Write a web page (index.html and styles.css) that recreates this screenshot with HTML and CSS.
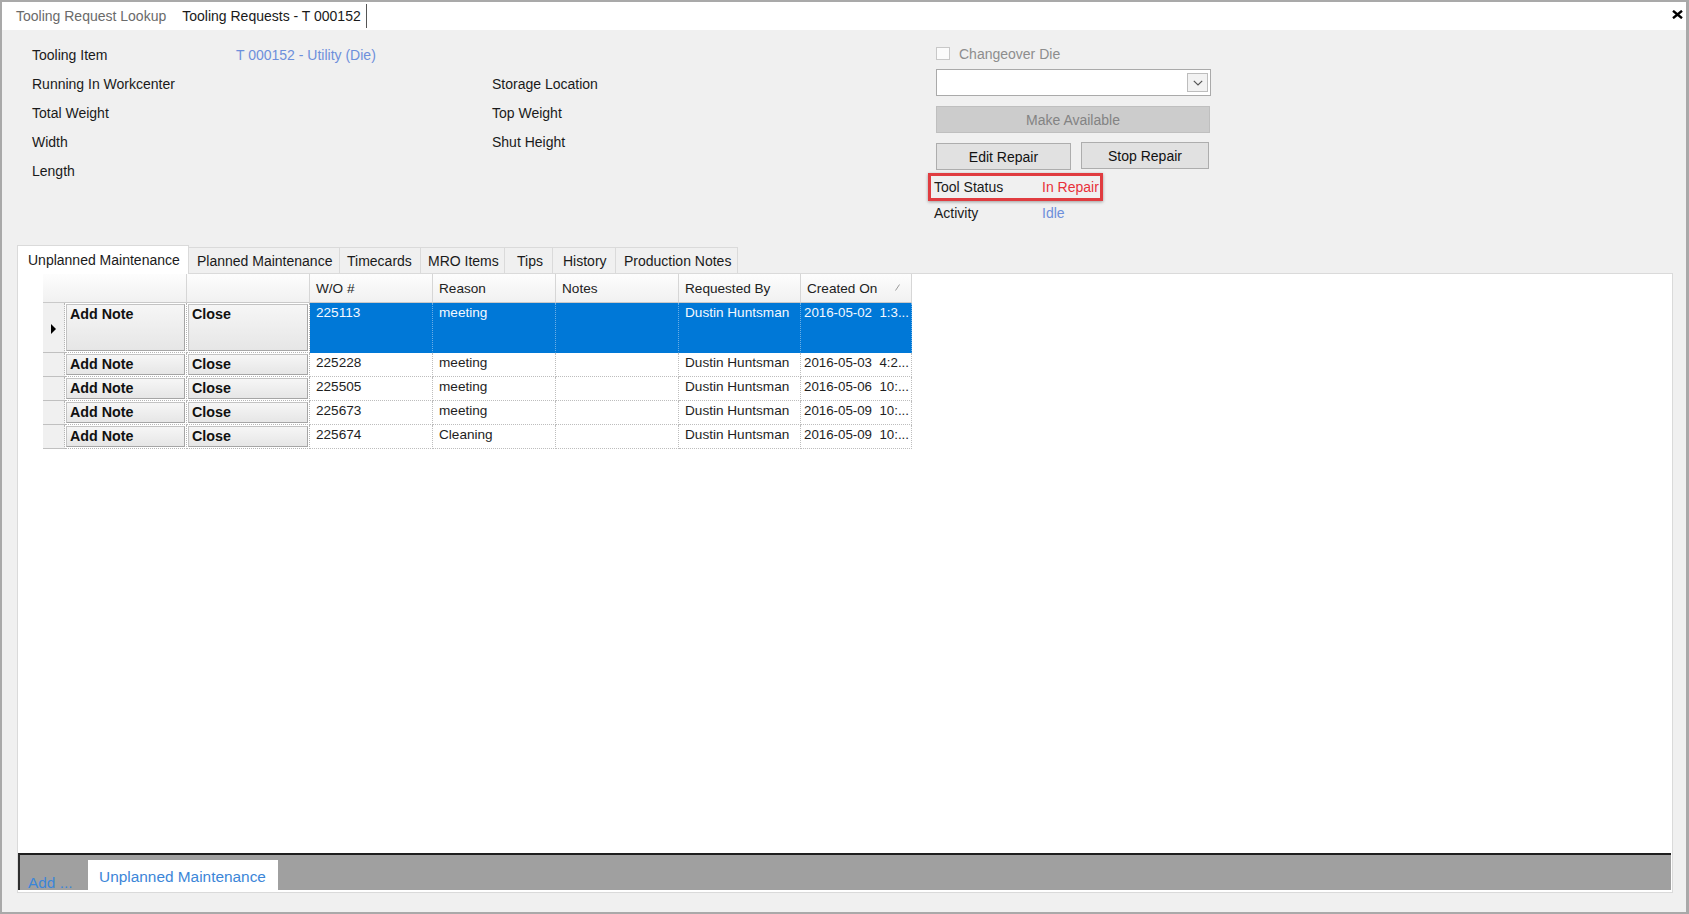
FILE: index.html
```html
<!DOCTYPE html>
<html>
<head>
<meta charset="utf-8">
<link rel="stylesheet" href="styles.css">
</head>
<body>
<div class="window">
  <div class="doctabs">
    <div class="doctab doctab-inactive">Tooling Request Lookup</div>
    <div class="doctab doctab-active">Tooling Requests - T 000152</div>
    <div class="doctab-sep"></div>
    <div class="doctab-close">
      <svg width="11" height="9" viewBox="0 0 11 9"><path d="M1 0.8 L10 8.2 M10 0.8 L1 8.2" stroke="#000" stroke-width="2.4" fill="none"/></svg>
    </div>
  </div>

  <div class="top">
    <div class="fields">
      <div class="lbl">Tooling Item</div><div class="val link">T 000152 - Utility (Die)</div><div></div>
      <div class="lbl">Running In Workcenter</div><div></div><div class="lbl">Storage Location</div>
      <div class="lbl">Total Weight</div><div></div><div class="lbl">Top Weight</div>
      <div class="lbl">Width</div><div></div><div class="lbl">Shut Height</div>
      <div class="lbl">Length</div><div></div><div></div>
    </div>
    <div class="controls">
      <div class="checkrow"><span class="checkbox"></span><span class="checklabel">Changeover Die</span></div>
      <div class="combo"><span class="combo-btn"><svg width="10" height="6" viewBox="0 0 10 6"><path d="M0.8 0.8 L5 5 L9.2 0.8" stroke="#555" stroke-width="1.2" fill="none"/></svg></span></div>
      <div class="btn-disabled">Make Available</div>
      <div class="btnrow">
        <div class="btn btn-edit">Edit Repair</div>
        <div class="btn btn-stop">Stop Repair</div>
      </div>
      <div class="status-box">
        <span class="st-label">Tool Status</span><span class="st-red">In Repair</span>
      </div>
      <div class="activity-row">
        <span class="st-label">Activity</span><span class="link">Idle</span>
      </div>
    </div>
  </div>

  <div class="tabs">
    <div class="tab tab-selected">Unplanned Maintenance</div>
    <div class="tab tab-planned">Planned Maintenance</div>
    <div class="tab tab-timecards">Timecards</div>
    <div class="tab tab-mro">MRO Items</div>
    <div class="tab tab-tips">Tips</div>
    <div class="tab tab-history">History</div>
    <div class="tab tab-notes">Production Notes</div>
  </div>

  <div class="panel">
    <div class="gridwrap">
      <div class="dgrid">
        <div class="hc hc-corner"></div>
        <div class="hc"></div>
        <div class="hc">W/O #</div>
        <div class="hc">Reason</div>
        <div class="hc">Notes</div>
        <div class="hc">Requested By</div>
        <div class="hc hc-sort">Created On<svg class="sortglyph" width="5" height="7" viewBox="0 0 5 7"><path d="M0.5 6.5 L4.5 0.5" stroke="#9a9a9a" stroke-width="1"/></svg></div>

        <div class="rh rh-current"><span class="tri"></span></div>
        <div class="bc"><div class="cbtn">Add Note</div></div>
        <div class="bc"><div class="cbtn">Close</div></div>
        <div class="dc sel">225113</div>
        <div class="dc sel">meeting</div>
        <div class="dc sel"></div>
        <div class="dc sel">Dustin Huntsman</div>
        <div class="dc sel date">2016-05-02  1:3...</div>

        <div class="rh"></div>
        <div class="bc"><div class="cbtn">Add Note</div></div>
        <div class="bc"><div class="cbtn">Close</div></div>
        <div class="dc">225228</div>
        <div class="dc">meeting</div>
        <div class="dc"></div>
        <div class="dc">Dustin Huntsman</div>
        <div class="dc date">2016-05-03  4:2...</div>

        <div class="rh"></div>
        <div class="bc"><div class="cbtn">Add Note</div></div>
        <div class="bc"><div class="cbtn">Close</div></div>
        <div class="dc">225505</div>
        <div class="dc">meeting</div>
        <div class="dc"></div>
        <div class="dc">Dustin Huntsman</div>
        <div class="dc date">2016-05-06  10:...</div>

        <div class="rh"></div>
        <div class="bc"><div class="cbtn">Add Note</div></div>
        <div class="bc"><div class="cbtn">Close</div></div>
        <div class="dc">225673</div>
        <div class="dc">meeting</div>
        <div class="dc"></div>
        <div class="dc">Dustin Huntsman</div>
        <div class="dc date">2016-05-09  10:...</div>

        <div class="rh"></div>
        <div class="bc"><div class="cbtn">Add Note</div></div>
        <div class="bc"><div class="cbtn">Close</div></div>
        <div class="dc">225674</div>
        <div class="dc">Cleaning</div>
        <div class="dc"></div>
        <div class="dc">Dustin Huntsman</div>
        <div class="dc date">2016-05-09  10:...</div>
      </div>
    </div>
    <div class="bottombar">
      <span class="addlink">Add ...</span>
      <div class="bartab">Unplanned Maintenance</div>
    </div>
  </div>
</div>
</body>
</html>
```
FILE: styles.css
```css
html, body {
  margin: 0;
  padding: 0;
}
body {
  width: 1689px;
  height: 914px;
  overflow: hidden;
  font-family: "Liberation Sans", Arial, sans-serif;
  font-size: 14px;
  color: #1a1a1a;
}
.window {
  box-sizing: border-box;
  width: 1689px;
  height: 914px;
  border: 2px solid #a9a9a9;
  border-right-width: 3px;
  background: #f0f0f0;
  display: flex;
  flex-direction: column;
}

/* document tabs */
.doctabs {
  height: 28px;
  flex: none;
  background: #fff;
  display: flex;
  align-items: center;
}
.doctab {
  line-height: 28px;
  white-space: nowrap;
}
.doctab-inactive {
  padding-left: 14px;
  color: #6a6a6a;
}
.doctab-active {
  margin-left: 16px;
  color: #1a1a1a;
}
.doctab-sep {
  width: 1px;
  height: 24px;
  margin-left: 5px;
  background: #555;
}
.doctab-close {
  margin-left: auto;
  margin-right: 3px;
  width: 11px;
  height: 9px;
  display: flex;
  margin-top: -4px;
}

/* top fields */
.top {
  height: 215px;
  flex: none;
  display: flex;
  padding-left: 30px;
}
.fields {
  width: 904px;
  display: grid;
  grid-template-columns: 204px 256px 444px;
  grid-auto-rows: 28.8px;
  padding-top: 11px;
  align-items: center;
  align-content: start;
}
.lbl {
  white-space: nowrap;
}
.link {
  color: #6d8fdb;
}
.controls {
  width: 276px;
  padding-top: 17px;
  display: flex;
  flex-direction: column;
}
.checkrow {
  height: 13px;
  display: flex;
  align-items: center;
}
.checkbox {
  box-sizing: border-box;
  width: 14px;
  height: 13px;
  border: 1px solid #c8c8c8;
  background: #fbfbfb;
}
.checklabel {
  margin-left: 9px;
  color: #8d8d8d;
}
.combo {
  box-sizing: border-box;
  margin-top: 9px;
  width: 275px;
  height: 27px;
  border: 1px solid #aaaaaa;
  background: #fff;
  display: flex;
  justify-content: flex-end;
  align-items: center;
  padding-right: 2px;
}
.combo-btn {
  box-sizing: border-box;
  width: 21px;
  height: 19px;
  border: 1px solid #bdbdbd;
  background: #f2f2f2;
  display: flex;
  align-items: center;
  justify-content: center;
}
.btn-disabled {
  box-sizing: border-box;
  margin-top: 10px;
  width: 274px;
  height: 27px;
  background: #cccccc;
  border: 1px solid #bfbfbf;
  color: #838383;
  display: flex;
  align-items: center;
  justify-content: center;
}
.btnrow {
  margin-top: 9px;
  display: flex;
  align-items: flex-start;
  gap: 10px;
}
.btn {
  box-sizing: border-box;
  height: 27px;
  background: #e1e1e1;
  border: 1px solid #adadad;
  display: flex;
  align-items: center;
  justify-content: center;
  color: #111;
}
.btn-edit {
  width: 135px;
  margin-top: 1px;
}
.btn-stop {
  width: 128px;
}
.status-box {
  box-sizing: border-box;
  margin-top: 3px;
  margin-left: -8px;
  width: 175px;
  height: 28px;
  border: 3px solid #e03c40;
  box-shadow: 0 1px 3px rgba(0, 0, 0, 0.35);
  padding-left: 3px;
  padding-bottom: 1px;
  display: flex;
  align-items: center;
}
.st-label {
  width: 108px;
  flex: none;
}
.st-red {
  color: #e8303a;
}
.activity-row {
  margin-top: 2px;
  margin-left: -2px;
  height: 20px;
  display: flex;
  align-items: center;
}

/* tabs */
.tabs {
  flex: none;
  height: 28px;
  margin-left: 15px;
  display: flex;
  align-items: flex-end;
  position: relative;
  z-index: 1;
}
.tab {
  box-sizing: border-box;
  height: 26px;
  padding: 0 0 0 8px;
  border: 1px solid #dadada;
  border-left: none;
  border-bottom: none;
  background: #f0f0f0;
  display: flex;
  align-items: center;
  white-space: nowrap;
}
.tab-planned { width: 151px; }
.tab-timecards { width: 81px; padding-left: 7px; }
.tab-mro { width: 84px; padding-left: 7px; }
.tab-tips { width: 48px; padding-left: 12px; }
.tab-history { width: 63px; padding-left: 10px; }
.tab-notes { width: 122px; padding-left: 8px; }
.tab-selected {
  height: 29px;
  width: 172px;
  padding: 6px 0 0 10px;
  margin-bottom: -1px;
  border-left: 1px solid #dadada;
  background: #fff;
  align-items: flex-start;
}

/* panel */
.panel {
  flex: 1;
  margin-left: 15px;
  margin-right: 13px;
  margin-bottom: 19px;
  border: 1px solid #dadada;
  background: #fff;
  display: flex;
  flex-direction: column;
}
.gridwrap {
  flex: 1;
  padding-left: 25px;
}
.dgrid {
  display: grid;
  grid-template-columns: 22px 122px 123px 123px 123px 123px 122px 111px;
  grid-template-rows: 29px 50px 24px 24px 24px 24px;
  width: 869px;
  font-size: 13.6px;
}
.hc {
  box-sizing: border-box;
  background: linear-gradient(#fdfdfd, #f1f1f1);
  border-right: 1px solid #d6d6d6;
  border-bottom: 1px solid #c9c9c9;
  padding-left: 6px;
  display: flex;
  align-items: center;
  white-space: nowrap;
  color: #222;
}
.hc-corner {
  grid-column: span 2;
}
.hc-sort {
  position: relative;
}
.sortglyph {
  position: absolute;
  right: 11px;
  top: 10px;
}
.rh {
  box-sizing: border-box;
  background: #f0f0f0;
  border-right: 1px dotted #b5b5b5;
  border-bottom: 1px solid #c0c0c0;
  position: relative;
}
.tri {
  position: absolute;
  left: 8px;
  top: 21px;
  width: 0;
  height: 0;
  border-top: 5px solid transparent;
  border-bottom: 5px solid transparent;
  border-left: 5px solid #000;
}
.bc {
  box-sizing: border-box;
  border-right: 1px dotted #b5b5b5;
  border-bottom: 1px dotted #b5b5b5;
  padding: 1px;
  display: flex;
}
.cbtn {
  flex: 1;
  box-sizing: border-box;
  background: linear-gradient(#f6f6f6, #e6e6e6);
  border: 1px solid #c3c3c3;
  border-right-color: #a5a5a5;
  border-bottom-color: #a5a5a5;
  font-weight: bold;
  font-size: 14.3px;
  padding-left: 3px;
  line-height: 18px;
  color: #111;
  white-space: nowrap;
}
.dc {
  box-sizing: border-box;
  border-right: 1px dotted #bdbdbd;
  border-bottom: 1px dotted #bdbdbd;
  padding: 1px 0 0 6px;
  line-height: 17px;
  white-space: pre;
  overflow: hidden;
  color: #1e1e1e;
}
.dc.date {
  padding-left: 3px;
  font-size: 13.3px;
  overflow: visible;
}
.dc.sel {
  background: #0078d7;
  color: #f4f8ff;
  border-right-color: #6aaee6;
  border-bottom-color: #0078d7;
}

/* bottom bar */
.bottombar {
  flex: none;
  box-sizing: border-box;
  height: 37px;
  margin: 0 1px 2px 0;
  background: #a0a0a0;
  border-top: 2px solid #1e1e1e;
  border-left: 2px solid #2e2e2e;
  display: flex;
  align-items: flex-end;
  padding-left: 8px;
}
.addlink {
  color: #3c86d8;
  font-size: 15.4px;
  line-height: 18px;
  margin-bottom: -2px;
}
.bartab {
  margin-left: 15px;
  width: 190px;
  height: 30px;
  background: #fff;
  color: #3c86d8;
  font-size: 15.4px;
  display: flex;
  align-items: center;
  justify-content: center;
  padding-top: 3px;
  box-sizing: border-box;
}
```
